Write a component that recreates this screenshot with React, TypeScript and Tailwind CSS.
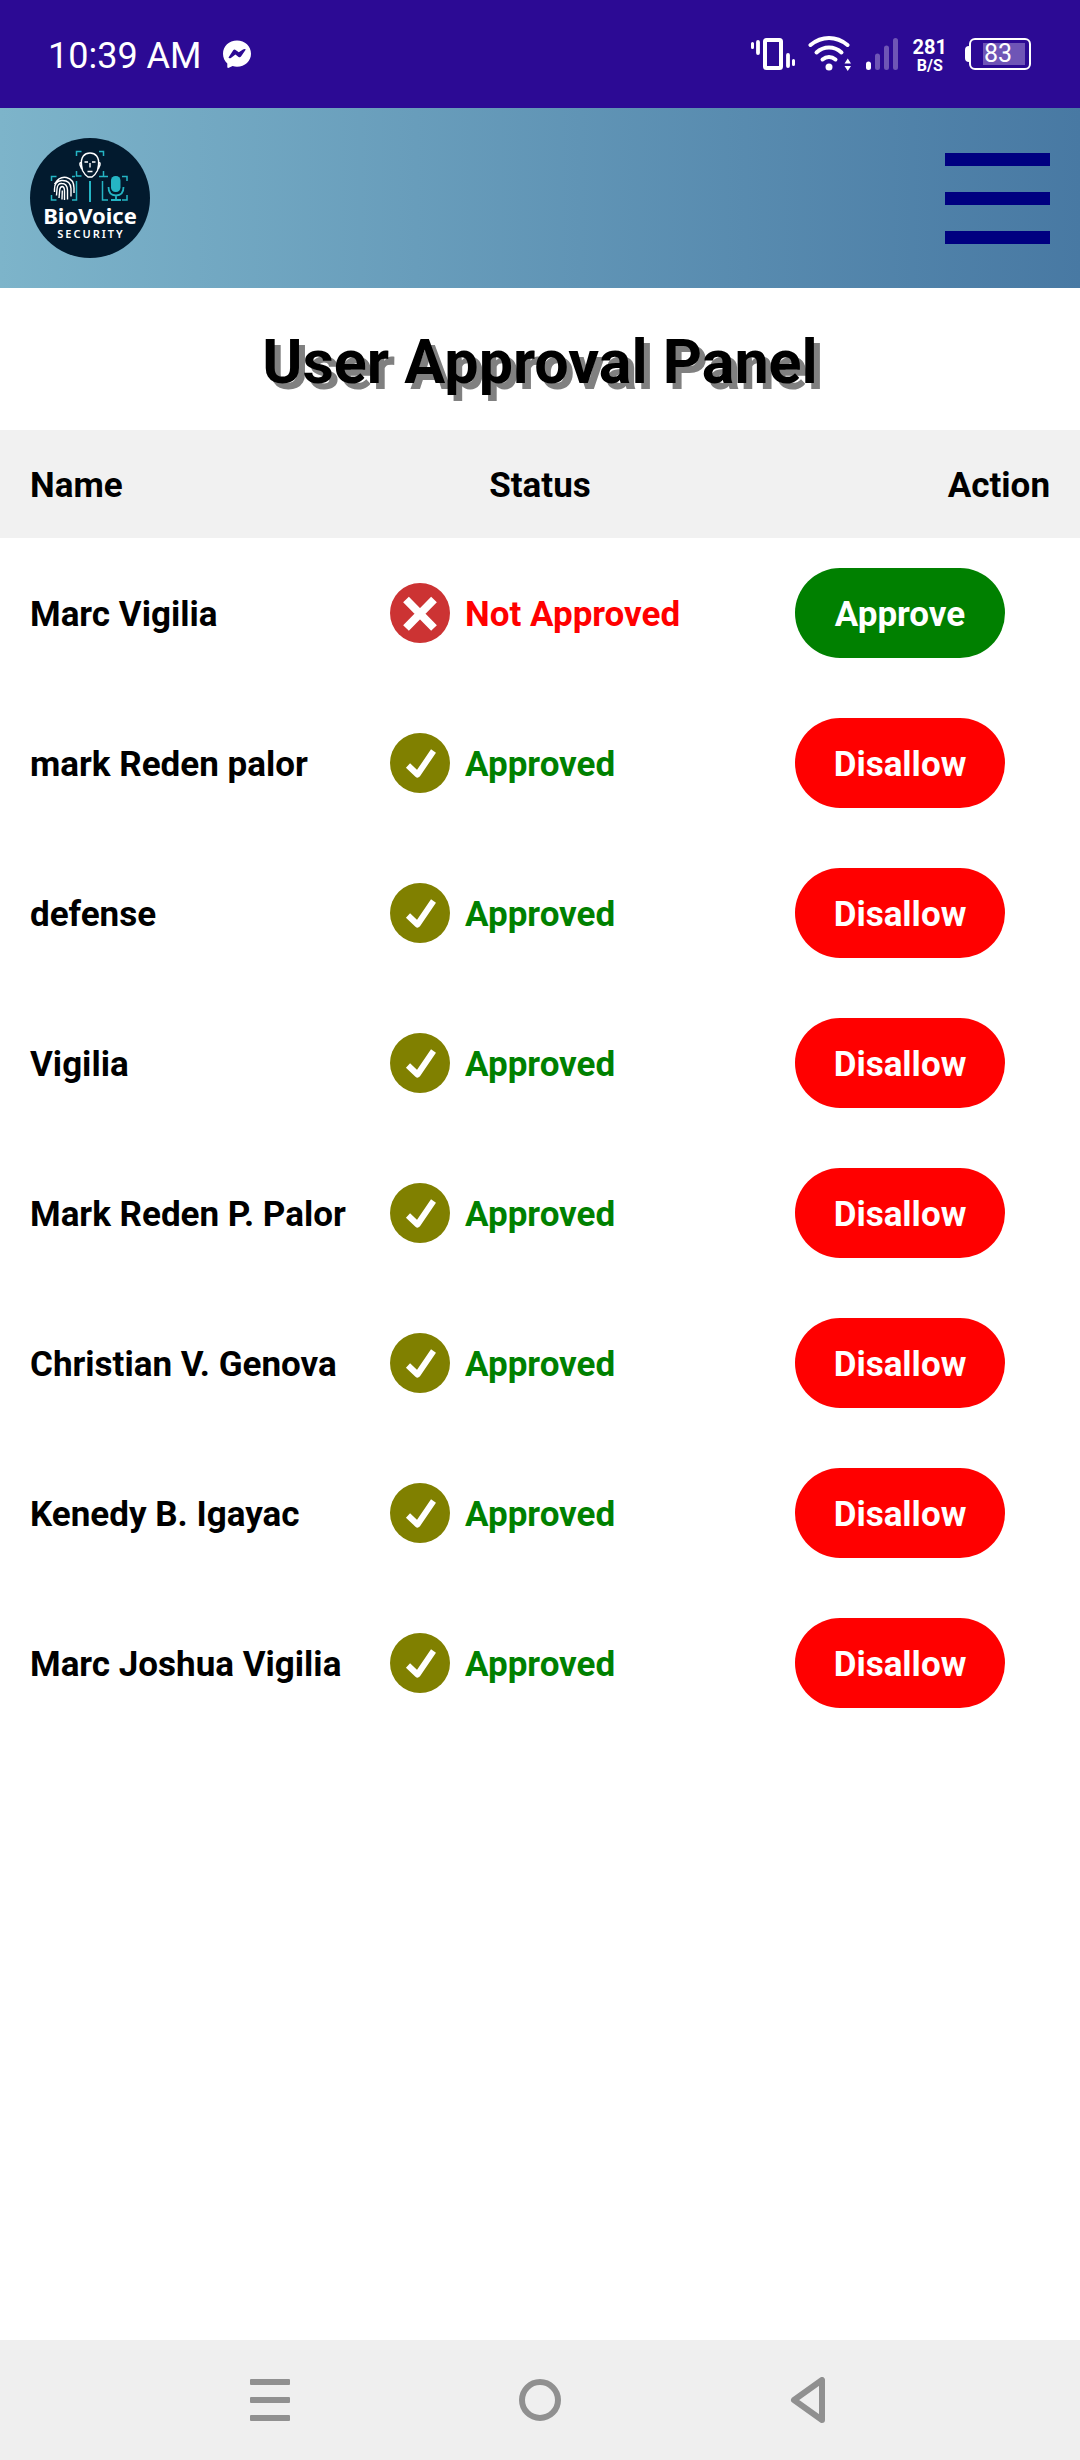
import React from "react";

type User = { name: string; approved: boolean };

const users: User[] = [
  { name: "Marc Vigilia", approved: false },
  { name: "mark Reden palor", approved: true },
  { name: "defense", approved: true },
  { name: "Vigilia", approved: true },
  { name: "Mark Reden P. Palor", approved: true },
  { name: "Christian V. Genova", approved: true },
  { name: "Kenedy B. Igayac", approved: true },
  { name: "Marc Joshua Vigilia", approved: true },
];

function MessengerIcon() {
  return (
    <svg className="ml-5 size-[30px]" viewBox="0 0 30 30" aria-label="Messenger">
      <path
        fill="#fff"
        d="M15 1.5C7 1.5 1 7.300 1 14.800c0 4 1.600 7.300 4.300 9.600v4.200l1 .4 4.300-1.900c1.400.4 2.900.6 4.400.6 8 0 14-5.700 14-13s-6-13.200-14-13.200z"
      />
      <path fill="#2c0a94" d="M6.500 18.500 11.200 11.300q1-1.300 2.400-.4l3.200 2.400 4.200-2.900q2-.9 2.800.2L19 17.600q-1 1.300-2.400.4l-3.200-2.400-4.500 3.300q-1.800.8-2.400-.4z" />
    </svg>
  );
}

function VibrateIcon() {
  return (
    <svg className="h-9 w-[46px]" viewBox="0 0 46 36" fill="none" stroke="#fff" strokeLinecap="round" aria-label="Vibrate">
      <rect x="15" y="4" width="16" height="28" rx="1.500" strokeWidth="4" />
      <path d="M2.500 7.500v4M43.500 24.500v4" strokeWidth="3" />
      <path d="M8 6v11M38 19v11" strokeWidth="3.800" />
    </svg>
  );
}

function WifiIcon() {
  return (
    <svg className="ml-3 h-9 w-[44px]" viewBox="0 0 44 36" fill="none" aria-label="Wi-Fi">
      <g stroke="#fff" strokeWidth="4" strokeLinecap="round">
        <path d="M2.500 9Q11 2 21 2t18.500 7" />
        <path d="M8.500 16.500Q14 11.500 21 11.500t12.500 5" />
        <path d="M14.500 23.500q3-2.500 6.500-2.500t6.500 2.500" />
      </g>
      <circle cx="21" cy="31" r="3.500" fill="#fff" />
      <path fill="#fff" d="M36.500 27.500h6.500l-3.250-5zM36.500 30h6.500l-3.250 5z" />
    </svg>
  );
}

function SignalIcon() {
  return (
    <svg className="ml-[13px] h-9 w-[34px]" viewBox="0 0 34 36" strokeWidth="5" strokeLinecap="round" aria-label="Signal">
      <path stroke="#fff" d="M3.500 28v3.500" />
      <path stroke="#6f55b6" d="M12.500 20v11.500M21.500 12v19.500M30.500 4.500v27" />
    </svg>
  );
}

function Logo() {
  return (
    <svg className="size-[120px]" viewBox="0 0 120 120" role="img" aria-label="BioVoice Security">
      <circle cx="60" cy="60" r="60" fill="#021a2e" />
      <g fill="none" stroke="#25b5c4" strokeWidth="1.500">
        <path d="M46.500 18v-4.500h5M69 13.500h4.500V18M46.500 33v5h5M69 38.500h4.500V33" />
        <path d="M21.500 43v-4.500h5M42 38.500h3M46.500 43v19H42M21.500 57v5h5M74 38.500h4M72.500 43v19H78M92 38.500h5V43M92 62h5v-5" />
        <path d="M60 43v21" strokeWidth="2" />
        <path d="M78.500 49q0 8.500 7.500 8.500t7.500-8.500M86 57.500v4.500M81 62h10" strokeWidth="1.800" />
      </g>
      <rect x="81" y="38" width="9.500" height="16" rx="4.500" fill="#25b5c4" />
      <g fill="none" stroke="#fff">
        <path strokeWidth="1.400" d="M51.500 27c-1-8 3-12 8.500-12s9.500 4 8.500 12l-1 5.500q-2 4-5.500 6.500h-4q-3.500-2.500-5.500-6.500zM51.500 24.500q-2-.5-1.500 2.500l1.700 4M68.500 24.500q2-.5 1.500 2.500l-1.700 4" />
        <path strokeWidth="1.400" d="M54.500 24h3.500M62 24h3.500M60 25v4.500M57.500 33.500h5" />
        <path strokeWidth="1.400" d="M24.500 46q5-8 12-6.500 7.500 2 7.500 10.500v5M24.500 54v-3q0-8 7-8.500 9-.5 9.500 8v8M26.500 57.500l.5-6.500q.5-6 5-5.500 5 0 5.500 6.500v9.500M29 60l.7-8q.5-3.500 2.600-3.500 2.200.5 2.200 4.500v9M32 61.500l.3-9" />
      </g>
      <text x="60" y="86" textAnchor="middle" fill="#fff" fontFamily="Noto Sans, sans-serif" fontWeight="700" fontSize="22">BioVoice</text>
      <text x="61" y="100" textAnchor="middle" fill="#fff" fontFamily="Noto Sans, sans-serif" fontWeight="600" fontSize="11" letterSpacing="2">SECURITY</text>
    </svg>
  );
}

function StatusIcon({ approved }: { approved: boolean }) {
  return (
    <svg className="size-[60px] shrink-0" viewBox="0 0 60 60" aria-hidden="true">
      <circle cx="30" cy="30" r="30" fill={approved ? "#808000" : "#cc3333"} />
      {approved ? (
        <path d="M18 32.500 27.500 41.500 43.500 18" fill="none" stroke="#fff" strokeWidth="6" strokeLinejoin="round" />
      ) : (
        <path d="M16 16.500 44 45M44 16.500 16 45" fill="none" stroke="#fff" strokeWidth="8" />
      )}
    </svg>
  );
}

export default function App() {
  return (
    <div className="flex min-h-screen flex-col bg-white font-[Roboto,sans-serif] text-black">
      <div className="flex h-[108px] items-center bg-[#2c0a94] pl-12 pr-[49px] text-white">
        <span className="pt-1 text-4xl">10:39 AM</span>
        <MessengerIcon />
        <div className="ml-auto flex items-center">
          <VibrateIcon />
          <WifiIcon />
          <SignalIcon />
          <div className="ml-[14px] flex flex-col items-center pt-1 font-bold">
            <span className="text-[20px] leading-[20px]">281</span>
            <span className="text-[16px] leading-[18px]">B/S</span>
          </div>
          <div className="ml-[18px] flex items-center">
            <span className="h-4 w-1 rounded-l bg-white" />
            <div className="flex h-8 w-[62px] items-center rounded-md border-2 border-white pl-3 pr-1">
              <span className="flex h-[22px] w-full items-center bg-[#6f55b6] pl-px text-[25px]">83</span>
            </div>
          </div>
        </div>
      </div>

      <header className="flex h-[180px] items-center justify-between bg-linear-to-r from-[#7db4ca] to-[#4879a3] px-[30px]">
        <Logo />
        <button type="button" aria-label="Open menu" className="flex w-[105px] flex-col gap-[26px]">
          <span className="h-[13px] w-full bg-[#000080]" />
          <span className="h-[13px] w-full bg-[#000080]" />
          <span className="h-[13px] w-full bg-[#000080]" />
        </button>
      </header>

      <main className="flex-1">
        <h1 className="flex h-[142px] items-center justify-center pt-2 text-[61px] font-bold [text-shadow:6px_6px_0_#808080]">
          User Approval Panel
        </h1>
        <table className="w-full table-fixed text-[35px] font-bold">
          <thead className="bg-[#f1f1f1]">
            <tr className="h-[108px]">
              <th scope="col" className="px-[30px] pt-1 text-left">Name</th>
              <th scope="col" className="px-[30px] pt-1 text-center">Status</th>
              <th scope="col" className="px-[30px] pt-1 text-right">Action</th>
            </tr>
          </thead>
          <tbody>
            {users.map((user) => (
              <tr key={user.name} className="h-[150px]">
                <td className="whitespace-nowrap pl-[30px] pt-1">{user.name}</td>
                <td className="pl-[30px]">
                  <div className={user.approved ? "flex items-center gap-[15px] text-[#008000]" : "flex items-center gap-[15px] text-[#ff0000]"}>
                    <StatusIcon approved={user.approved} />
                    <span className="whitespace-nowrap pt-1">{user.approved ? "Approved" : "Not Approved"}</span>
                  </div>
                </td>
                <td>
                  <button
                    type="button"
                    className={
                      user.approved
                        ? "mx-auto block h-[90px] w-[210px] rounded-full bg-[#ff0000] pt-1 text-white"
                        : "mx-auto block h-[90px] w-[210px] rounded-full bg-[#008000] pt-1 text-white"
                    }
                  >
                    {user.approved ? "Disallow" : "Approve"}
                  </button>
                </td>
              </tr>
            ))}
          </tbody>
        </table>
      </main>

      <nav aria-label="System navigation" className="grid h-[120px] grid-cols-[1fr_270px_1fr] items-center bg-[#efefef]">
        <button type="button" aria-label="Recent apps" className="flex justify-end pr-[115px]">
          <svg className="h-[42px] w-10" viewBox="0 0 40 42" fill="#909090">
            <rect width="40" height="6" rx="1" />
            <rect y="18" width="40" height="6" rx="1" />
            <rect y="36" width="40" height="6" rx="1" />
          </svg>
        </button>
        <button type="button" aria-label="Home" className="flex justify-center">
          <svg className="size-[42px]" viewBox="0 0 42 42">
            <circle cx="21" cy="21" r="18" fill="none" stroke="#909090" strokeWidth="6" />
          </svg>
        </button>
        <button type="button" aria-label="Back" className="flex pl-[115px]">
          <svg className="h-[46px] w-[35px]" viewBox="0 0 35 46">
            <path d="M32 3v40L4 23z" fill="none" stroke="#909090" strokeWidth="6" strokeLinejoin="round" />
          </svg>
        </button>
      </nav>
    </div>
  );
}
